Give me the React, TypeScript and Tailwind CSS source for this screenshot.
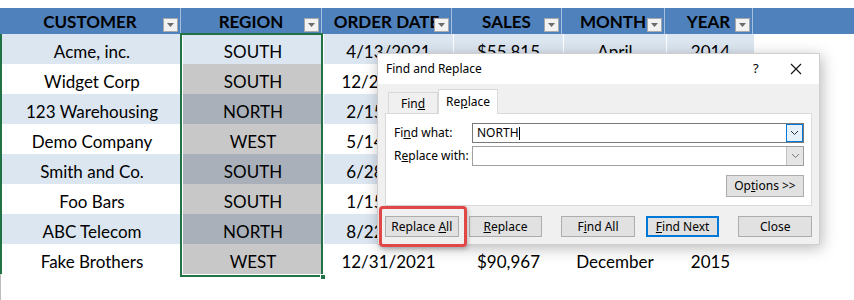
import React from "react";

const columns = [
  { title: "CUSTOMER", width: "w-[181px]" },
  { title: "REGION", width: "w-[141px]" },
  { title: "ORDER DATE", width: "w-[130px]" },
  { title: "SALES", width: "w-[110px]" },
  { title: "MONTH", width: "w-[103px]" },
  { title: "YEAR", width: "w-[88px]" },
];

const rows = [
  ["Acme, inc.", "SOUTH", "4/13/2021", "$55,815", "April", "2014"],
  ["Widget Corp", "SOUTH", "12/21/2021", "$41,232", "December", "2016"],
  ["123 Warehousing", "NORTH", "2/15/2021", "$23,569", "February", "2015"],
  ["Demo Company", "WEST", "5/14/2021", "$62,740", "May", "2014"],
  ["Smith and Co.", "SOUTH", "6/28/2021", "$18,455", "June", "2016"],
  ["Foo Bars", "SOUTH", "1/15/2021", "$77,108", "January", "2015"],
  ["ABC Telecom", "NORTH", "8/22/2021", "$34,920", "August", "2014"],
  ["Fake Brothers", "WEST", "12/31/2021", "$90,967", "December", "2015"],
];

function FilterButton() {
  return (
    <div className="absolute right-[2px] bottom-[2px] w-[15px] h-[14px] bg-[#f2f2f2] border border-[#a9a9a9] flex items-center justify-center">
      <svg width="7" height="4" viewBox="0 0 7 4">
        <path d="M0 0 L7 0 L3.5 4 Z" fill="#6b6b6b" />
      </svg>
    </div>
  );
}

function regionBg(i: number) {
  if (i === 0) return "bg-[#dce6f1]";
  return i % 2 === 0 ? "bg-[#a9b0b9]" : "bg-[#c8c8c8]";
}

function Chevron({ color }: { color: string }) {
  return (
    <svg width="9" height="6" viewBox="0 0 9 6">
      <path d="M1 1 L4.5 4.5 L8 1" fill="none" stroke={color} strokeWidth="1" />
    </svg>
  );
}

function DlgButton({
  children,
  primary,
}: {
  children: React.ReactNode;
  primary?: boolean;
}) {
  return (
    <button
      className={
        "w-[74px] h-[21px] bg-[#e1e1e1] text-[12px] text-black flex items-center justify-center " +
        (primary ? "border-2 border-[#0078d7]" : "border border-[#adadad]")
      }
    >
      <span>{children}</span>
    </button>
  );
}

export default function App() {
  return (
    <div className="relative w-[854px] h-[300px] bg-white overflow-hidden font-['Lato',sans-serif] text-[17px] text-black">
      {/* sheet */}
      <div className="pt-[8px]">
        <div className="flex h-[26px] bg-[#4f81bd]">
          {columns.map((c) => (
            <div
              key={c.title}
              className={`relative ${c.width} border-r border-[#a7bfdd] flex items-center justify-center font-bold pt-[1px]`}
            >
              {c.title}
              <FilterButton />
            </div>
          ))}
        </div>
        <div className="border-l-2 border-[#217346] w-[755px]">
          {rows.map((r, i) => (
            <div
              key={i}
              className={`flex h-[30px] ${i % 2 === 0 ? "bg-[#dce6f1]" : "bg-white"}`}
            >
              {r.map((v, j) => (
                <div
                  key={j}
                  className={`${columns[j].width} ${j === 0 ? "w-[179px]" : ""} border-r border-white flex items-center justify-center pt-[5px] ${
                    j === 1 ? regionBg(i) : ""
                  }`}
                >
                  {v}
                </div>
              ))}
            </div>
          ))}
        </div>
        <div className="border-l border-[#bdbdbd] h-[30px]" />
      </div>

      {/* selection border on REGION column */}
      <div className="absolute left-[180px] top-[33px] w-[143px] h-[244px] border-2 border-[#217346] pointer-events-none">
        <div className="absolute -right-[5px] -bottom-[5px] w-[6px] h-[6px] bg-[#217346] border border-white" />
      </div>

      {/* Find and Replace dialog */}
      <div className="absolute left-[377px] top-[53px] w-[443px] h-[192px] bg-[#f0f0f0] border border-[#cfcfcf] shadow-[2px_3px_14px_rgba(0,0,0,0.28)] font-['Noto_Sans',sans-serif] text-[12px]">
        <div className="h-[30px] bg-white flex items-center pl-[8px]">
          <span className="flex-1">Find and Replace</span>
          <span className="w-[20px] text-[13px]">?</span>
          <div className="w-[46px] flex justify-center">
            <svg width="12" height="12" viewBox="0 0 12 12">
              <path d="M1 1 L11 11 M11 1 L1 11" stroke="#111" strokeWidth="1.1" />
            </svg>
          </div>
        </div>

        <div className="px-[7px]">
          <div className="flex items-end h-[29px] pl-[3px]">
            <div className="w-[50px] h-[21px] flex items-center justify-center border border-b-0 border-[#d9d9d9] bg-[#f0f0f0] pt-[2px]">
              <span>
                Fin<u>d</u>
              </span>
            </div>
            <div className="w-[60px] h-[25px] flex items-center justify-center border border-b-0 border-[#d9d9d9] bg-white -mb-px relative z-10">
              <span>
                Re<u>p</u>lace
              </span>
            </div>
          </div>
          <div className="h-[93px] bg-white border border-[#d9d9d9] pt-[9px] pr-[7px]">
            <div className="flex items-center h-[20px]">
              <div className="w-[86px] pl-[8px]">
                Fi<u>n</u>d what:
              </div>
              <div className="flex-1 h-[20px] border border-[#7a7a7a] flex items-center">
                <span className="pl-[4px]">NORTH</span>
                <span className="w-px h-[13px] bg-black" />
                <span className="flex-1" />
                <div className="w-[17px] h-[18px] bg-[#e5f1fb] border border-[#0078d7] flex items-center justify-center">
                  <Chevron color="#333" />
                </div>
              </div>
            </div>
            <div className="flex items-center h-[20px] mt-[3px]">
              <div className="w-[86px] pl-[8px]">
                R<u>e</u>place with:
              </div>
              <div className="flex-1 h-[20px] border border-[#a0a0a0] flex items-center">
                <span className="flex-1" />
                <div className="w-[17px] h-[18px] bg-[#e5e5e5] border-l border-[#c0c0c0] flex items-center justify-center">
                  <Chevron color="#777" />
                </div>
              </div>
            </div>
            <div className="flex justify-end mt-[9px]">
              <div className="w-[78px] h-[22px] bg-[#e1e1e1] border border-[#adadad] flex items-center justify-center">
                <span>
                  Op<u>t</u>ions &gt;&gt;
                </span>
              </div>
            </div>
          </div>

          <div className="flex items-center mt-[10px]">
            <DlgButton>
              Replace <u>A</u>ll
            </DlgButton>
            <div className="w-[10px]" />
            <DlgButton>
              <u>R</u>eplace
            </DlgButton>
            <div className="w-[19px]" />
            <DlgButton>
              F<u>i</u>nd All
            </DlgButton>
            <div className="w-[11px]" />
            <DlgButton primary>
              <u>F</u>ind Next
            </DlgButton>
            <div className="w-[19px]" />
            <DlgButton>Close</DlgButton>
          </div>
        </div>
      </div>

      {/* highlight around Replace All */}
      <div className="absolute left-[379px] top-[206px] w-[88px] h-[41px] border-[3px] border-[#e04848] rounded-[4px] shadow-[1px_2px_4px_rgba(0,0,0,0.25)] pointer-events-none" />
    </div>
  );
}
